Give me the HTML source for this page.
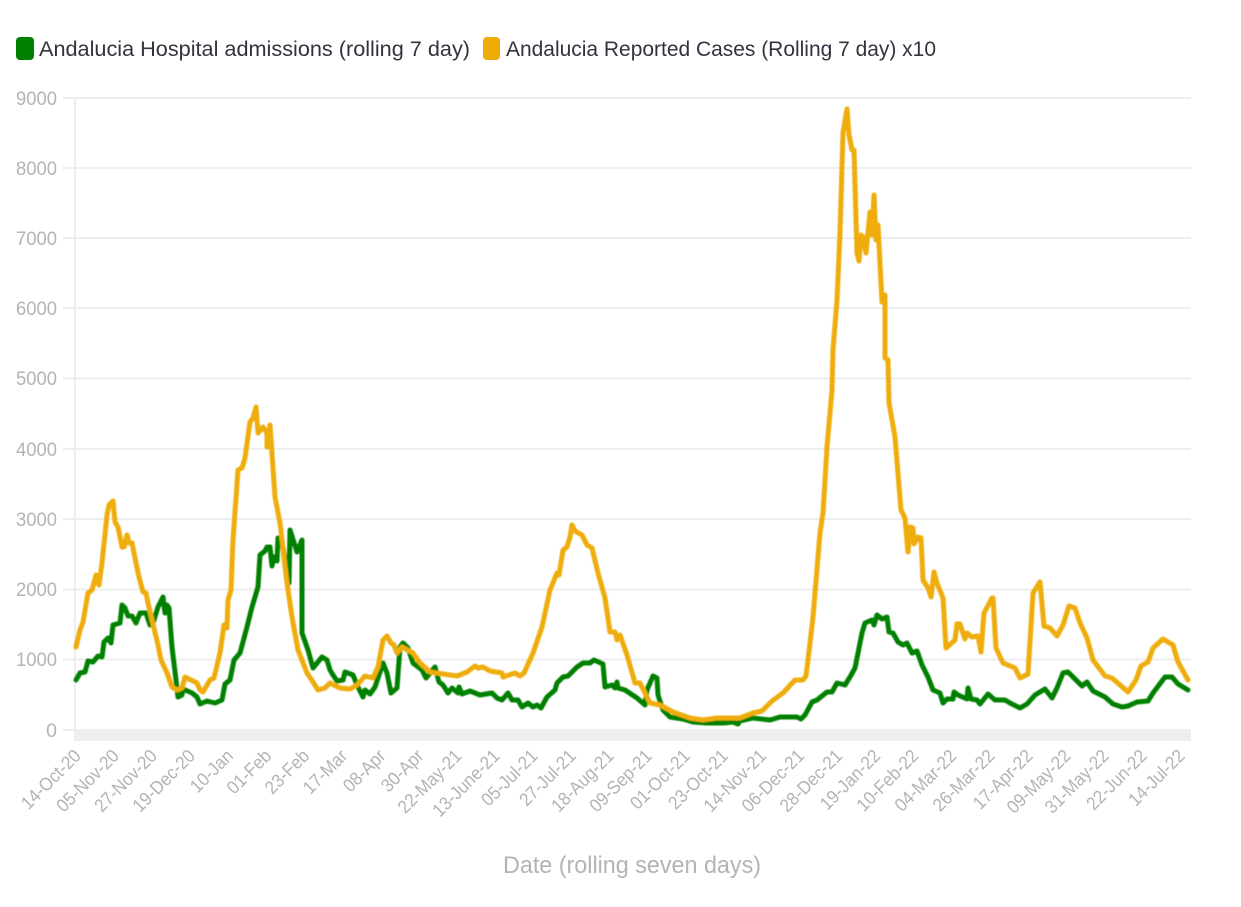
<!DOCTYPE html>
<html lang="en"><head><meta charset="utf-8"><title>Andalucia chart</title>
<style>html,body{margin:0;padding:0;background:#fff;width:1241px;height:907px;overflow:hidden}svg{display:block}text{font-family:"Liberation Sans",sans-serif}</style>
</head><body>
<svg width="1241" height="907" viewBox="0 0 1241 907" xmlns="http://www.w3.org/2000/svg">
<defs><filter id="b" x="-5%" y="-5%" width="110%" height="110%"><feGaussianBlur stdDeviation="0.45"/></filter></defs>
<rect x="16" y="37" width="18" height="23" rx="4" fill="#008000"/>
<text x="39" y="56" font-size="21" fill="#33333f" textLength="431" lengthAdjust="spacingAndGlyphs">Andalucia Hospital admissions (rolling 7 day)</text>
<rect x="483" y="37" width="17" height="23" rx="4" fill="#efac07"/>
<text x="506" y="56" font-size="21" fill="#33333f" textLength="430" lengthAdjust="spacingAndGlyphs">Andalucia Reported Cases (Rolling 7 day) x10</text>
<g stroke="#eeeeee" stroke-width="2" fill="none">
<path d="M63 98H1191M63 168H1191M63 238H1191M63 308H1191M63 378.500H1191M63 449H1191M63 519H1191M63 589.500H1191M63 659.500H1191M63 730H75M75 98V741"/>
</g>
<rect x="74" y="729" width="1117" height="12" fill="#eeeeee"/>
<g font-size="19.500" fill="#b3b3b8" text-anchor="end">
<text x="57" y="105" textLength="41" lengthAdjust="spacingAndGlyphs">9000</text><text x="57" y="175" textLength="41" lengthAdjust="spacingAndGlyphs">8000</text><text x="57" y="245" textLength="41" lengthAdjust="spacingAndGlyphs">7000</text><text x="57" y="315" textLength="41" lengthAdjust="spacingAndGlyphs">6000</text><text x="57" y="385" textLength="41" lengthAdjust="spacingAndGlyphs">5000</text><text x="57" y="456" textLength="41" lengthAdjust="spacingAndGlyphs">4000</text><text x="57" y="526" textLength="41" lengthAdjust="spacingAndGlyphs">3000</text><text x="57" y="596" textLength="41" lengthAdjust="spacingAndGlyphs">2000</text><text x="57" y="666" textLength="41" lengthAdjust="spacingAndGlyphs">1000</text><text x="57" y="737">0</text>
</g>
<g filter="url(#b)" fill="none" stroke-width="5" stroke-linejoin="round" stroke-linecap="round">
<polyline stroke="#008000" points="76,680 80,673 85,672 88,661 93,662 98,656 102,657 104,642 108,638 111,643 113,625 120,623 122,605 125,608 128,616 132,616 136,623 140,613 146,613 150,625 153,623 158,607 163,597 165,613 167,605 169,608 172,647 176,680 178,697 182,695 183,689 192,693 197,697 200,704 207,701 215,703 222,700 225,684 230,680 234,660 240,653 247,627 252,607 258,587 260,555 265,551 267,547 270,547 272,566 274,557 277,561 278,538 283,548 289,583 290,530 297,552 302,540 302,633 308,650 313,668 322,657 327,660 330,670 333,675 337,681 343,680 345,672 353,675 357,685 363,697 365,690 370,694 375,687 383,663 387,673 391,693 397,688 400,647 403,643 408,648 413,663 422,670 426,678 435,667 439,682 443,685 448,693 452,688 458,693 459,687 462,694 470,691 480,695 492,693 497,698 502,700 508,693 512,700 518,700 522,707 528,703 533,707 537,705 541,708 547,697 555,690 557,683 563,677 568,676 577,667 583,663 590,663 594,660 603,664 605,687 612,685 615,688 617,682 618,688 625,690 637,698 645,705 647,690 653,676 657,678 658,695 663,710 670,717 683,719 693,722 707,723 723,723 733,722 738,724 740,721 753,718 770,720 780,717 797,717 801,719 805,715 812,702 817,700 827,692 832,692 837,683 845,685 850,677 855,668 862,633 865,623 872,620 874,625 877,615 882,619 887,617 889,632 893,633 898,642 903,645 907,643 912,653 917,651 922,665 928,677 933,690 940,693 943,703 947,699 953,699 954,692 958,695 967,699 968,688 971,699 977,700 980,704 988,694 995,700 1005,700 1010,703 1020,708 1027,704 1035,695 1045,689 1052,698 1057,688 1063,673 1068,672 1082,686 1087,682 1093,691 1105,697 1113,704 1122,707 1128,706 1137,702 1148,701 1153,693 1165,677 1172,677 1178,684 1188,690"/>
<polyline stroke="#efac07" points="76,647 80,630 83,622 88,593 92,590 96,575 99,585 102,563 107,515 109,505 113,501 115,522 118,527 122,547 124,547 127,535 129,543 132,543 136,563 139,577 143,592 146,593 148,603 152,620 158,645 161,660 167,673 172,687 177,690 182,688 185,677 197,683 200,690 203,692 210,680 214,678 220,653 224,625 227,628 228,600 231,590 233,540 238,470 242,468 245,458 250,422 253,418 256,407 258,433 263,427 267,433 267,447 270,425 275,497 280,523 287,583 292,617 298,650 307,673 313,682 318,690 325,688 330,683 340,688 350,689 357,685 365,676 373,678 378,667 383,640 387,636 391,643 394,645 397,653 402,647 413,653 420,663 430,672 443,674 457,676 467,672 475,666 478,668 483,667 490,671 502,673 503,677 512,674 515,673 520,676 524,673 533,653 542,627 550,590 557,573 559,575 563,550 567,547 570,537 572,525 575,531 582,535 587,545 592,548 598,573 605,598 610,632 615,632 617,640 620,635 627,655 635,683 640,683 645,693 650,703 660,705 673,712 690,718 703,720 717,718 740,718 753,713 762,711 772,701 783,693 795,680 803,680 806,676 808,660 813,617 820,533 823,513 827,447 832,390 833,350 837,300 840,233 843,133 847,109 849,135 852,150 854,150 857,253 859,261 861,235 863,237 866,253 870,212 872,235 874,195 876,240 878,225 882,302 885,295 885,358 888,360 889,403 895,437 901,510 905,518 908,552 910,527 913,528 914,544 918,537 921,538 923,580 928,588 931,597 934,572 937,583 943,598 946,648 955,640 957,624 960,624 965,639 967,633 972,637 978,636 981,652 984,613 992,598 993,598 996,648 1003,663 1015,668 1020,678 1028,674 1033,593 1040,582 1044,626 1050,628 1057,636 1063,625 1069,606 1075,608 1080,623 1087,638 1093,660 1105,676 1112,678 1128,692 1136,680 1141,666 1148,662 1153,648 1163,639 1173,645 1178,662 1188,680"/>
</g>
<g font-size="18.500" fill="#b3b3b8" text-anchor="end">
<text transform="translate(82,757) rotate(-45) scale(.92,1)">14-Oct-20</text>
<text transform="translate(120.100,757) rotate(-45) scale(.92,1)">05-Nov-20</text>
<text transform="translate(158.100,757) rotate(-45) scale(.92,1)">27-Nov-20</text>
<text transform="translate(196.200,757) rotate(-45) scale(.92,1)">19-Dec-20</text>
<text transform="translate(234.300,757) rotate(-45) scale(.92,1)">10-Jan</text>
<text transform="translate(272.400,757) rotate(-45) scale(.92,1)">01-Feb</text>
<text transform="translate(310.400,757) rotate(-45) scale(.92,1)">23-Feb</text>
<text transform="translate(348.500,757) rotate(-45) scale(.92,1)">17-Mar</text>
<text transform="translate(386.600,757) rotate(-45) scale(.92,1)">08-Apr</text>
<text transform="translate(424.600,757) rotate(-45) scale(.92,1)">30-Apr</text>
<text transform="translate(462.700,757) rotate(-45) scale(.92,1)">22-May-21</text>
<text transform="translate(500.800,757) rotate(-45) scale(.92,1)">13-June-21</text>
<text transform="translate(538.800,757) rotate(-45) scale(.92,1)">05-Jul-21</text>
<text transform="translate(576.900,757) rotate(-45) scale(.92,1)">27-Jul-21</text>
<text transform="translate(615,757) rotate(-45) scale(.92,1)">18-Aug-21</text>
<text transform="translate(653.100,757) rotate(-45) scale(.92,1)">09-Sep-21</text>
<text transform="translate(691.100,757) rotate(-45) scale(.92,1)">01-Oct-21</text>
<text transform="translate(729.200,757) rotate(-45) scale(.92,1)">23-Oct-21</text>
<text transform="translate(767.300,757) rotate(-45) scale(.92,1)">14-Nov-21</text>
<text transform="translate(805.300,757) rotate(-45) scale(.92,1)">06-Dec-21</text>
<text transform="translate(843.400,757) rotate(-45) scale(.92,1)">28-Dec-21</text>
<text transform="translate(881.500,757) rotate(-45) scale(.92,1)">19-Jan-22</text>
<text transform="translate(919.500,757) rotate(-45) scale(.92,1)">10-Feb-22</text>
<text transform="translate(957.600,757) rotate(-45) scale(.92,1)">04-Mar-22</text>
<text transform="translate(995.700,757) rotate(-45) scale(.92,1)">26-Mar-22</text>
<text transform="translate(1033.800,757) rotate(-45) scale(.92,1)">17-Apr-22</text>
<text transform="translate(1071.800,757) rotate(-45) scale(.92,1)">09-May-22</text>
<text transform="translate(1109.900,757) rotate(-45) scale(.92,1)">31-May-22</text>
<text transform="translate(1148,757) rotate(-45) scale(.92,1)">22-Jun-22</text>
<text transform="translate(1186,757) rotate(-45) scale(.92,1)">14-Jul-22</text>
</g>
<text x="503" y="873" font-size="24" fill="#b3b3b8" textLength="258" lengthAdjust="spacingAndGlyphs">Date (rolling seven days)</text>
</svg>
</body></html>
